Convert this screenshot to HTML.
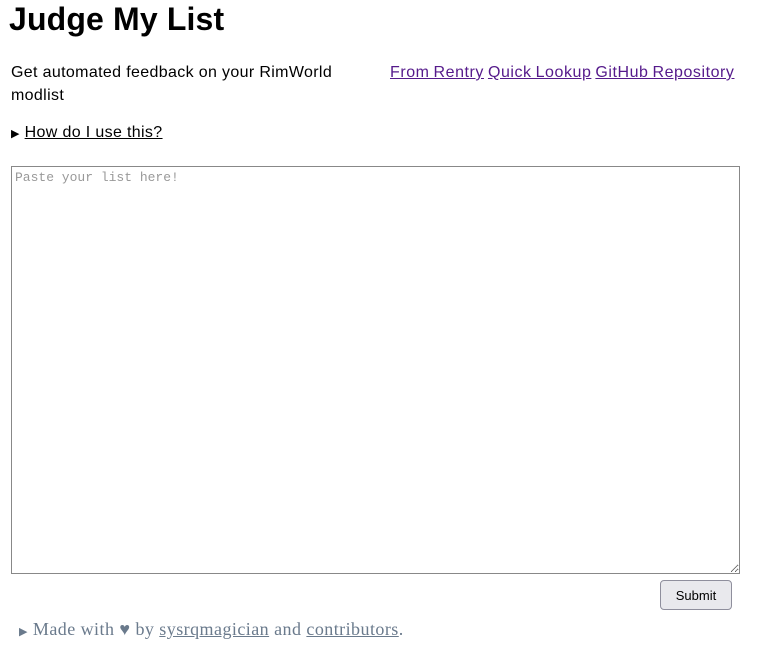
<!DOCTYPE html>
<html><head><meta charset="utf-8"><style>
body{margin:0;background:#fff;width:758px;height:649px;overflow:hidden;position:relative;font-family:"Liberation Sans",sans-serif;color:#000}
.a{position:absolute;white-space:nowrap}
h1{position:absolute;left:9px;top:1px;margin:0;font-size:32px;font-weight:bold;letter-spacing:0.15px}
.t{font-size:16px;letter-spacing:0.35px}
a{color:#551a8b;text-decoration:underline}
textarea{position:absolute;left:11px;top:166px;width:729px;height:408px;box-sizing:border-box;border:1px solid #888;margin:0;padding:3px;font-family:"Liberation Mono",monospace;font-size:13px;resize:both}
textarea::placeholder{color:#999}
button{position:absolute;left:660px;top:580px;width:72px;height:30px;border:1px solid #8f8f9d;border-radius:4px;background:#e9e9ed;font-family:"Liberation Sans",sans-serif;font-size:13px;color:#000}
.f{font-family:"Liberation Serif",serif;font-size:18px;letter-spacing:0.45px;color:#6a7a8c}
.f a{color:#6a7a8c}
</style></head><body>
<h1>Judge My List</h1>
<div class="a t" style="left:11px;top:64px">Get automated feedback on your RimWorld</div>
<div class="a t" style="left:11px;top:87px">modlist</div>
<div class="a t" style="left:390px;top:64px;letter-spacing:0.55px;word-spacing:-1px"><a>From Rentry</a> <a>Quick Lookup</a> <a>GitHub Repository</a></div>
<div class="a t" style="left:11px;top:124px"><span style="font-size:11px">▶</span> <span style="text-decoration:underline">How do I use this?</span></div>
<textarea placeholder="Paste your list here!"></textarea>
<button>Submit</button>
<div class="a f" style="left:19px;top:619px"><span style="font-size:11px">▶</span> Made with ♥ by <a>sysrqmagician</a> and <a>contributors</a>.</div>
</body></html>
